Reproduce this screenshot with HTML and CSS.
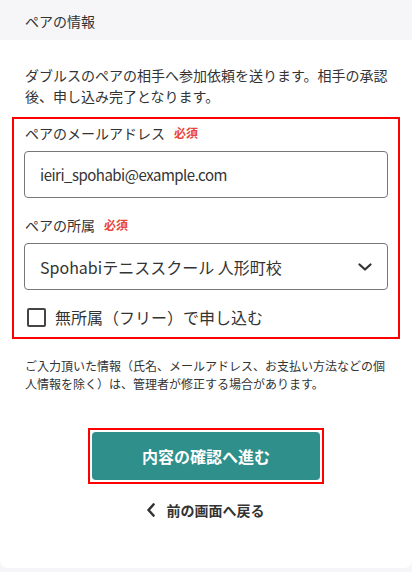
FILE: index.html
```html
<!DOCTYPE html>
<html lang="ja">
<head>
<meta charset="utf-8">
<link rel="stylesheet" href="styles.css">
</head>
<body>
<div class="page-head">ペアの情報</div>
<main class="card">
  <p class="desc">ダブルスのペアの相手へ参加依頼を送ります。相手の承認後、申し込み完了となります。</p>
  <section class="group">
    <div class="label">ペアのメールアドレス<span class="req">必須</span></div>
    <div class="field email">ieiri_spohabi@example.com</div>
    <div class="label label-2">ペアの所属<span class="req">必須</span></div>
    <div class="field select">
      <span>Spohabiテニススクール 人形町校</span>
      <svg class="chev" width="14" height="8" viewBox="0 0 14 8"><path d="M1.5 1.5 L7 6.5 L12.5 1.5" fill="none" stroke="#333" stroke-width="2.2" stroke-linecap="round" stroke-linejoin="round"/></svg>
    </div>
    <label class="check"><span class="box"></span>無所属（フリー）で申し込む</label>
  </section>
  <p class="note">ご入力頂いた情報（氏名、メールアドレス、お支払い方法などの個人情報を除く）は、管理者が修正する場合があります。</p>
  <div class="btn-wrap">
    <div class="btn-outline"><button class="btn">内容の確認へ進む</button></div>
  </div>
  <div class="back">
    <svg width="10" height="14" viewBox="0 0 10 14"><path d="M7.5 1.5 L2.5 7 L7.5 12.5" fill="none" stroke="#333" stroke-width="2.6" stroke-linecap="round" stroke-linejoin="round"/></svg>
    <span>前の画面へ戻る</span>
  </div>
</main>
</body>
</html>
```

FILE: styles.css
```css
* { box-sizing: border-box; }
html, body { margin: 0; padding: 0; }
body {
  background: #f6f6f8;
  font-family: "Noto Sans CJK JP", "Noto Sans", sans-serif;
  color: #333;
  width: 412px;
  height: 572px;
  overflow: hidden;
}
.page-head {
  height: 40px;
  padding-left: 25px;
  font-size: 14px;
  line-height: 42px;
  color: #333;
}
.card {
  background: #fff;
  height: 528px;
  border-radius: 0 0 8px 8px;
  padding: 25px 12px 0;
}
.desc {
  margin: 0 0 10px;
  padding: 0 12px 0 13px;
  font-size: 14px;
  line-height: 21px;
  color: #333;
}
.group {
  border: 2px solid #f00;
  padding: 4px 10px 8px;
}
.label {
  font-size: 14px;
  line-height: 20px;
  padding-left: 1px;
  margin-bottom: 8px;
  display: flex;
  align-items: center;
}
.label-2 { margin-top: 17px; }
.req {
  color: #e8453c;
  font-weight: 700;
  font-size: 12px;
  margin-left: 9px;
}
.field {
  height: 47px;
  border: 1px solid #777;
  border-radius: 4px;
  padding: 0 15px;
  display: flex;
  align-items: center;
  font-size: 16px;
  color: #333;
}
.email { font-size: 15px; letter-spacing: -0.5px; }
.select { justify-content: space-between; padding-right: 15px; }
.check {
  display: flex;
  align-items: center;
  margin-top: 15px;
  height: 24px;
  font-size: 16px;
  color: #333;
  padding-left: 3px;
}
.box {
  width: 19px;
  height: 19px;
  border: 2px solid #444;
  border-radius: 2px;
  margin-right: 9px;
}
.note {
  margin: 18px 0 0;
  padding: 0 12px 0 13px;
  font-size: 12px;
  line-height: 18px;
  color: #333;
}
.btn-wrap {
  display: flex;
  justify-content: center;
  margin-top: 35px;
}
.btn-outline {
  border: 2px solid #f00;
  padding: 2px;
}
.btn {
  display: block;
  width: 228px;
  height: 48px;
  border: 0;
  border-radius: 4px;
  background: #2e8f8b;
  color: #fff;
  font-family: "Noto Sans CJK JP", "Noto Sans", sans-serif;
  font-size: 16px;
  font-weight: 700;
}
.back {
  display: flex;
  align-items: center;
  justify-content: center;
  gap: 11px;
  margin-top: 16px;
  height: 20px;
  font-size: 14px;
  font-weight: 700;
  color: #333;
  padding-right: 2px;
}
```
